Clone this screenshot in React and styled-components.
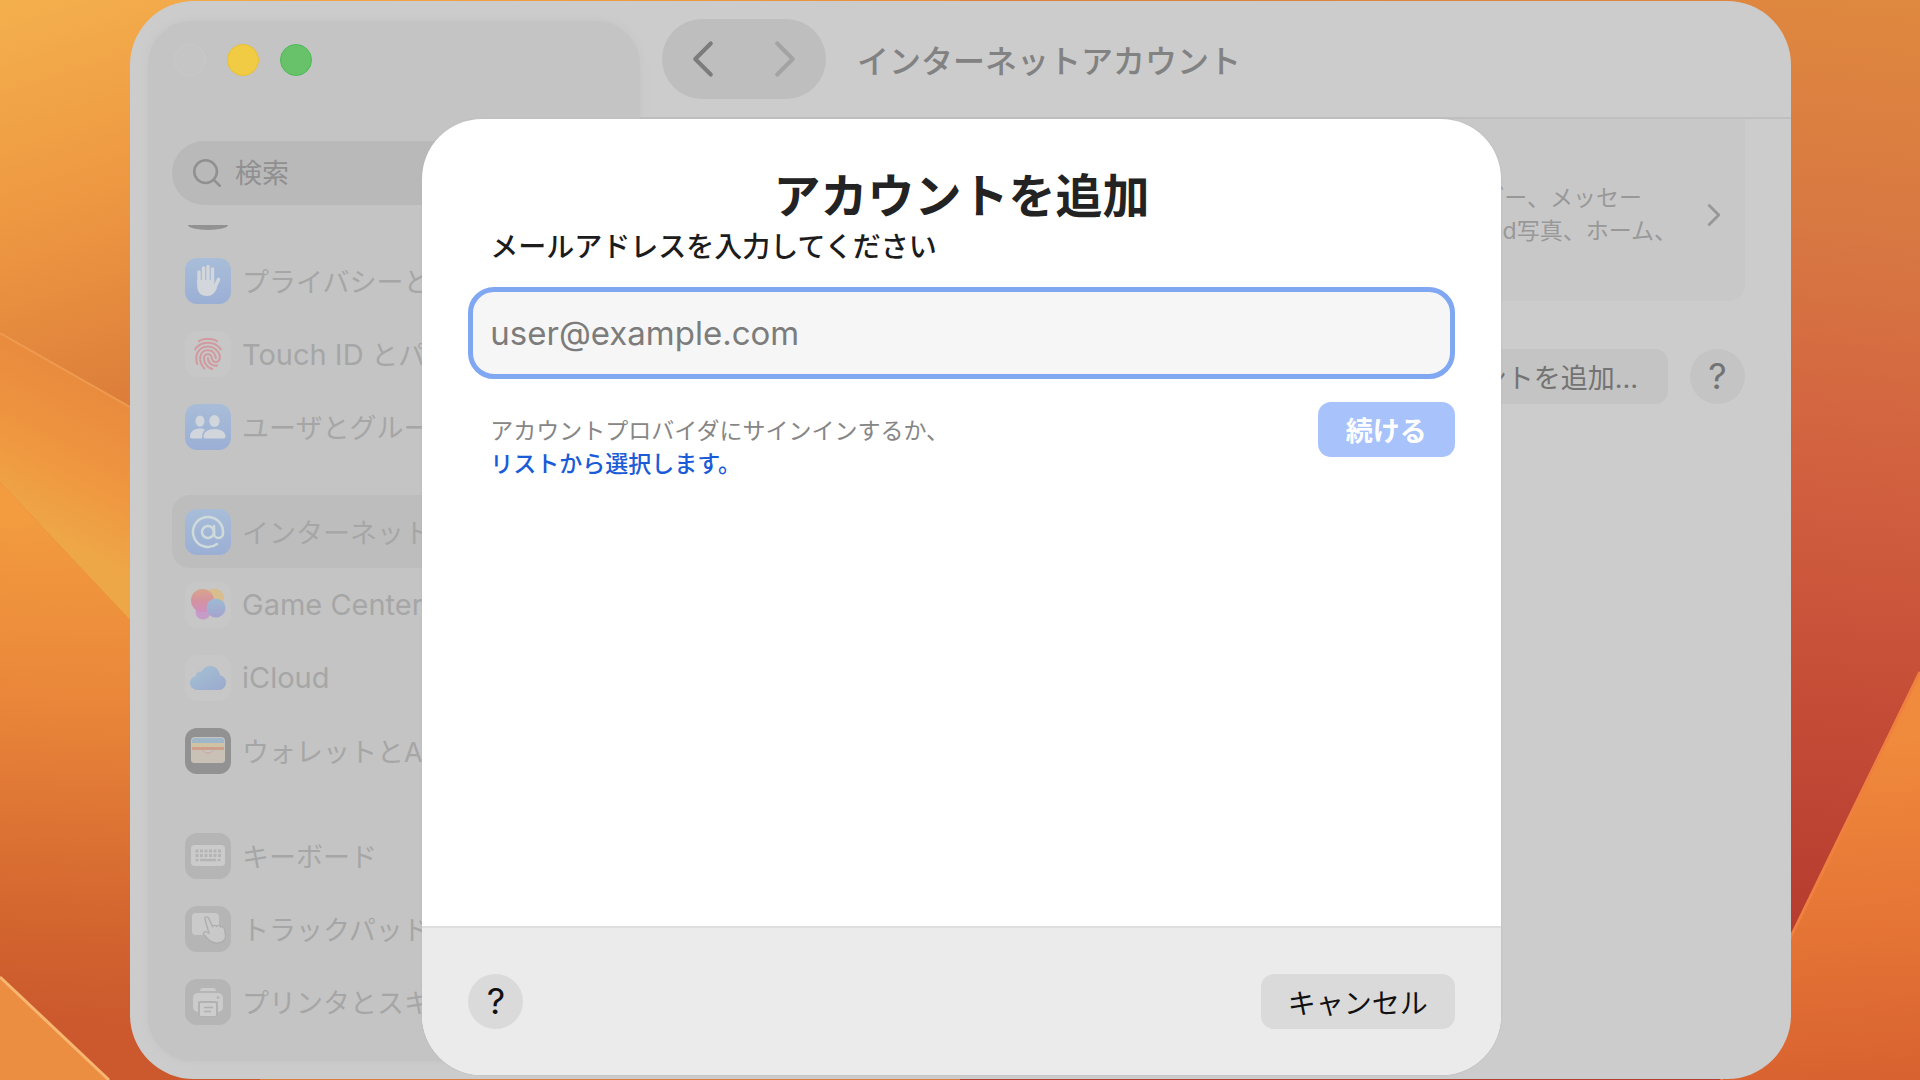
import React from "react";
import styled, { createGlobalStyle } from "styled-components";
import { AtSign, ChevronLeft, ChevronRight, Search } from "lucide-react";
import { IoFingerPrint } from "react-icons/io5";

const GlobalStyle = createGlobalStyle`
  * {
    box-sizing: border-box;
  }

  body {
    margin: 0;
    font-family: Inter, "Noto Sans CJK JP", sans-serif;
  }

  button,
  input {
    font-family: inherit;
  }
`;

const Desktop = styled.div`
  position: relative;
  min-height: 100vh;
  padding: 1px 129px 1px 130px;
  display: flex;
  overflow: hidden;
`;

const WallpaperSvg = styled.svg`
  position: absolute;
  inset: 0;
  width: 100%;
  height: 100%;
`;

const Window = styled.div`
  position: relative;
  flex: 1;
  display: flex;
  border-radius: 64px;
  background: #cccccc;
  overflow: hidden;
`;

const Sidebar = styled.aside`
  width: 492px;
  margin: 20px 0 18px 18px;
  padding: 23px 24px 20px;
  border-radius: 44px;
  background: #c4c4c4;
  box-shadow: 0 0 8px #c4c4c4;
`;

const Lights = styled.div`
  display: flex;
  gap: 21px;
  padding-left: 2px;
`;

const Light = styled.button`
  width: 32px;
  height: 32px;
  padding: 0;
  border: 1px solid ${(props) => props.$border};
  border-radius: 50%;
  background: ${(props) => props.$color};
`;

const SearchField = styled.label`
  display: flex;
  align-items: center;
  gap: 11px;
  height: 64px;
  margin-top: 65px;
  padding: 0 18px;
  border-radius: 32px;
  background: #b9b9b9;
  color: #909090;
`;

const SearchInput = styled.input`
  flex: 1;
  min-width: 0;
  padding: 0;
  border: none;
  outline: none;
  background: none;
  font-size: 27px;

  &::placeholder {
    color: #909090;
    opacity: 1;
  }
`;

const ClippedIcon = styled.div`
  width: 40px;
  height: 5px;
  margin: 20px 0 14px 16px;
  border-radius: 0 0 20px 20px / 0 0 5px 5px;
  background: #929292;
`;

const Group = styled.ul`
  margin: 0 0 32px;
  padding: 0;
  list-style: none;

  &:last-child {
    margin-bottom: 0;
  }
`;

const Item = styled.a`
  display: flex;
  align-items: center;
  gap: 11px;
  height: 73px;
  padding: 0 13px;
  border-radius: 18px;
  background: ${(props) => (props.$active ? "#bdbdbd" : "none")};
  color: #a6a6a6;
  font-size: 27px;
  text-decoration: none;
  white-space: nowrap;
`;

const Latin = styled.span`
  font-size: 29px;
`;

const Tile = styled.span`
  display: flex;
  align-items: center;
  justify-content: center;
  flex: none;
  width: 46px;
  height: 46px;
  border-radius: 12px;
  background: ${(props) => props.$background};
  color: ${(props) => props.$color};
`;

const Main = styled.main`
  flex: 1;
  min-width: 0;
  display: flex;
  flex-direction: column;
`;

const Toolbar = styled.header`
  display: flex;
  align-items: center;
  gap: 31px;
  height: 118px;
  padding: 0 22px;
  border-bottom: 2px solid #bfbfbf;
`;

const NavButtons = styled.div`
  display: flex;
  width: 164px;
  height: 80px;
  border-radius: 40px;
  background: #bebebe;
`;

const NavButton = styled.button`
  flex: 1;
  display: flex;
  align-items: center;
  justify-content: center;
  padding: 0;
  border: none;
  background: none;
  color: ${(props) => (props.disabled ? "#a3a3a3" : "#7c7c7c")};
`;

const WindowTitle = styled.h1`
  margin: 0;
  color: #828282;
  font-size: 32px;
  font-weight: 500;
`;

const Content = styled.div`
  display: flex;
  flex-direction: column;
  gap: 48px;
  padding: 0 46px 0 40px;
`;

const AccountCard = styled.a`
  display: flex;
  align-items: center;
  justify-content: flex-end;
  gap: 18px;
  height: 182px;
  padding: 10px 12px 0;
  border-radius: 0 0 16px 16px;
  background: #c8c8c8;
  color: #989898;
  font-size: 23px;
  line-height: 33px;
  text-decoration: none;
  white-space: nowrap;
`;

const Actions = styled.div`
  display: flex;
  justify-content: flex-end;
  gap: 22px;
`;

const AddButton = styled.button`
  height: 55px;
  padding: 0 30px;
  border: none;
  border-radius: 13px;
  background: #c4c4c4;
  color: #737373;
  font-size: 27px;
`;

const HelpButton = styled.button`
  width: 55px;
  height: 55px;
  padding: 0;
  border: none;
  border-radius: 50%;
  background: ${(props) => (props.$dimmed ? "#c4c4c4" : "#dadada")};
  color: ${(props) => (props.$dimmed ? "#737373" : "#111111")};
  font-size: 36px;
  font-weight: 400;
  line-height: 55px;
`;

const Overlay = styled.div`
  position: absolute;
  inset: 0;
  display: flex;
  justify-content: center;
  padding: 118px 0 4px 2px;
`;

const Dialog = styled.section`
  display: flex;
  flex-direction: column;
  width: 65%;
  border-radius: 60px;
  background: #ffffff;
  box-shadow: 0 0 2px #b5b5b5;
  overflow: hidden;
`;

const Form = styled.form`
  flex: 1;
  display: flex;
  flex-direction: column;
  padding: 50px 46px 0;
`;

const DialogTitle = styled.h2`
  margin: 0;
  color: #232323;
  font-size: 47px;
  font-weight: 700;
  line-height: 54px;
  text-align: center;
`;

const EmailLabel = styled.label`
  margin: 4px 0 20px;
  padding-left: 22px;
  color: #1c1c1c;
  font-size: 28px;
  font-weight: 500;
  line-height: 40px;
`;

const EmailInput = styled.input`
  height: 92px;
  padding: 0 17px;
  border: 5px solid #80a7f2;
  border-radius: 26px;
  outline: none;
  background: #f6f6f6;
  font-size: 33px;

  &::placeholder {
    color: #7c7c7c;
    opacity: 1;
  }
`;

const FormRow = styled.div`
  display: flex;
  align-items: flex-start;
  justify-content: space-between;
  margin-top: 23px;
`;

const Hint = styled.p`
  margin: 0;
  padding: 13px 0 0 22px;
  color: #868686;
  font-size: 23px;
  line-height: 33px;
`;

const HintLink = styled.a`
  display: block;
  color: #1a5bd7;
  font-weight: 500;
  text-decoration: none;
`;

const ContinueButton = styled.button`
  height: 55px;
  padding: 0 28px;
  border: none;
  border-radius: 13px;
  background: #a8c3fc;
  color: #ffffff;
  font-size: 27px;
  font-weight: 700;
`;

const Footer = styled.footer`
  display: flex;
  align-items: center;
  justify-content: space-between;
  height: 149px;
  padding: 0 46px;
  border-top: 2px solid #dedede;
  background: #ebebeb;
`;

const CancelButton = styled.button`
  height: 55px;
  padding: 0 27px;
  border: none;
  border-radius: 13px;
  background: #dadada;
  color: #111111;
  font-size: 28px;
`;

const Wallpaper = () => (
  <WallpaperSvg viewBox="0 0 1920 1080" preserveAspectRatio="none" aria-hidden="true">
    <defs>
      <linearGradient id="sky" x1="0" y1="0" x2="130" y2="400" gradientUnits="userSpaceOnUse">
        <stop offset="0" stopColor="#f4b04d" />
        <stop offset="0.5" stopColor="#ee9842" />
        <stop offset="1" stopColor="#dc7e3a" />
      </linearGradient>
      <linearGradient id="band" x1="90" y1="390" x2="20" y2="520" gradientUnits="userSpaceOnUse">
        <stop offset="0" stopColor="#e98c3e" />
        <stop offset="0.5" stopColor="#ef9640" />
        <stop offset="1" stopColor="#eea747" />
      </linearGradient>
      <linearGradient id="dune" x1="60" y1="520" x2="40" y2="1020" gradientUnits="userSpaceOnUse">
        <stop offset="0" stopColor="#f29b3f" />
        <stop offset="0.35" stopColor="#ea873a" />
        <stop offset="0.8" stopColor="#d3652f" />
        <stop offset="1" stopColor="#cb592d" />
      </linearGradient>
      <linearGradient id="dusk" x1="1900" y1="0" x2="1800" y2="930" gradientUnits="userSpaceOnUse">
        <stop offset="0" stopColor="#df883f" />
        <stop offset="0.25" stopColor="#d87842" />
        <stop offset="0.5" stopColor="#d26140" />
        <stop offset="0.75" stopColor="#c54d37" />
        <stop offset="1" stopColor="#b63c2f" />
      </linearGradient>
      <linearGradient id="ember" x1="1880" y1="740" x2="1900" y2="1080" gradientUnits="userSpaceOnUse">
        <stop offset="0" stopColor="#f08a3c" />
        <stop offset="0.5" stopColor="#e67636" />
        <stop offset="1" stopColor="#d86230" />
      </linearGradient>
    </defs>
    <rect width="960" height="1080" fill="url(#sky)" />
    <path d="M0 333L260 481V758L0 482Z" fill="url(#band)" />
    <path d="M0 333L260 481" stroke="#ee9a50" strokeWidth="2" />
    <path d="M0 482L260 758V1080H0Z" fill="url(#dune)" />
    <path d="M0 977L109 1080H0Z" fill="#ec8e41" />
    <path d="M0 977L109 1080" stroke="#f8b771" strokeWidth="3" />
    <rect x="960" width="960" height="1080" fill="url(#dusk)" />
    <path d="M1920 672L1721 1080H1920Z" fill="url(#ember)" />
    <path d="M1920 672L1721 1080" stroke="#f0803f" strokeWidth="3" />
  </WallpaperSvg>
);

const HandIcon = () => (
  <svg width="46" height="46" viewBox="0 0 46 46" fill="none" stroke="currentColor" strokeLinecap="round">
    <path d="M14 14V26M18.500 10V24M23 8.500V24M27.500 11V24" strokeWidth="3.400" />
    <path d="M33.500 21.500L29 31" strokeWidth="3.600" />
    <path d="M12.300 22H29.200V27L32 29.500C30 35 27.500 38 22 38C15.500 38 12.300 34 12.300 28Z" fill="currentColor" stroke="none" />
  </svg>
);

const PeopleIcon = () => (
  <svg width="46" height="46" viewBox="0 0 46 46" fill="currentColor">
    <ellipse cx="15" cy="17" rx="4.500" ry="5.500" />
    <ellipse cx="29.500" cy="17" rx="5.200" ry="6" />
    <path d="M5 32.500C5 28 9 24.500 15 24.500C17 24.500 18.800 25 20 25.800C18 27.500 17 30 17 34.500H7C5.600 34.500 5 33.800 5 32.500Z" />
    <path d="M18.500 32.500C18.500 28 23 25 29.500 25C36 25 40.500 28 40.500 32.500C40.500 33.800 39.700 34.500 38.500 34.500H20.500C19.200 34.500 18.500 33.800 18.500 32.500Z" />
  </svg>
);

const GameCenterIcon = () => (
  <svg width="46" height="46" viewBox="0 0 46 46">
    <defs>
      <linearGradient id="bubbleRed" x1="0" y1="0" x2="0" y2="1">
        <stop offset="0" stopColor="#d9a48c" />
        <stop offset="0.5" stopColor="#d4939f" />
        <stop offset="1" stopColor="#cf8fbd" />
      </linearGradient>
      <linearGradient id="bubbleBlue" x1="0" y1="0" x2="0" y2="1">
        <stop offset="0" stopColor="#9dbbd3" />
        <stop offset="1" stopColor="#a4a3cd" />
      </linearGradient>
    </defs>
    <ellipse cx="29" cy="15.500" rx="10" ry="9" fill="#d8bd8d" />
    <circle cx="18" cy="30" r="7.500" fill="#c59bc8" />
    <circle cx="17.500" cy="18.500" r="11.500" fill="url(#bubbleRed)" />
    <circle cx="31" cy="26" r="9.500" fill="url(#bubbleBlue)" />
  </svg>
);

const CloudIcon = () => (
  <svg width="46" height="46" viewBox="0 0 46 46">
    <defs>
      <linearGradient id="cloudFill" x1="0" y1="0" x2="1" y2="1">
        <stop offset="0" stopColor="#a4c2d3" />
        <stop offset="1" stopColor="#9ba9ce" />
      </linearGradient>
    </defs>
    <path d="M13 35C8.500 35 5 32 5 28C5 24.500 7.500 22 10.500 21.300C10.800 18 13.500 16 16.500 16.600C18.200 13 21.500 11 25 11C30.500 11 34.500 15 35 20.500C38.800 21 41 24 41 27.500C41 32 37.800 35 33.500 35Z" fill="url(#cloudFill)" />
  </svg>
);

const WalletIcon = () => (
  <svg width="46" height="46" viewBox="0 0 46 46">
    <rect x="6" y="9" width="34" height="26" rx="4" fill="#c6c5c2" />
    <path d="M7 13C7 11 8.500 10 10 10H36C37.500 10 39 11 39 13V15H7Z" fill="#9fb7c9" />
    <rect x="7" y="15" width="32" height="4" fill="#cfc3a4" />
    <rect x="7" y="19" width="32" height="3" fill="#cf9f8e" />
    <path d="M6 22H17C19 22 19 25 23 25C27 25 27 22 29 22H40V31C40 33.500 38.500 35 36 35H10C7.500 35 6 33.500 6 31Z" fill="#c9c0b6" />
    <path d="M17 22C19 22 19 25 23 25C27 25 27 22 29 22" fill="none" stroke="#cba598" strokeWidth="1" />
  </svg>
);

const KeyboardIcon = () => (
  <svg width="46" height="46" viewBox="0 0 46 46">
    <rect x="6" y="12" width="34" height="21" rx="4" fill="#cbcbcb" />
    <path d="M10.500 18H36M10.500 22.500H36" stroke="#b4b4b4" strokeWidth="3" strokeDasharray="3 1.500" />
    <path d="M10.500 27H13.500M15 27H31M32.500 27H35.500" stroke="#b4b4b4" strokeWidth="2.500" />
  </svg>
);

const TrackpadIcon = () => (
  <svg width="46" height="46" viewBox="0 0 46 46">
    <rect x="7" y="7" width="27" height="22" rx="4" fill="#cacaca" />
    <path
      d="M20 13.500C19 10.800 22.500 9.800 23.700 12.300L27.500 20.500C28.500 18.800 30.800 19 31.500 20.500C33 18.800 35 19.300 35.500 21C37.500 20 39 21.300 39.500 23.500L40.500 29C41 33.500 38 36.500 33.500 37C28 37.500 24.500 35 22 32L18.800 28.500C17.500 26.500 19.500 25 21.500 26L24 27.300Z"
      fill="#c9c9c9"
      stroke="#adadad"
      strokeWidth="1.300"
    />
  </svg>
);

const PrinterIcon = () => (
  <svg width="46" height="46" viewBox="0 0 46 46">
    <path d="M15 12C15 10 16 9 18 9H28C30 9 31 10 31 12Z" fill="#cbcbcb" />
    <rect x="8" y="14" width="30" height="19" rx="5" fill="#cbcbcb" />
    <rect x="13" y="22" width="20" height="16" rx="2" fill="#b2b2b2" />
    <rect x="15" y="24" width="16" height="13" rx="1" fill="#cdcdcd" />
    <path d="M19 28.500H28M19 32.500H26" stroke="#b0b0b0" strokeWidth="1.600" />
    <circle cx="33" cy="18.500" r="1.300" fill="#b2b2b2" />
  </svg>
);

const blue = "linear-gradient(#a8bdd8, #9bafd5)";
const gray = "#b5b5b5";
const light = "#c7c7c7";

const groups = [
  [
    { name: "プライバシーとセキュリティ", background: blue, color: "#d3d6da", icon: <HandIcon /> },
    {
      latin: "Touch ID",
      name: "とパスワード",
      background: light,
      color: "#d09a9f",
      icon: <IoFingerPrint size={34} />,
    },
    { name: "ユーザとグループ", background: blue, color: "#d0d6db", icon: <PeopleIcon /> },
  ],
  [
    {
      name: "インターネットアカウント",
      background: blue,
      color: "#cfdada",
      icon: <AtSign size={36} strokeWidth={1.7} />,
      active: true,
    },
    { latin: "Game Center", background: light, icon: <GameCenterIcon /> },
    { latin: "iCloud", background: light, icon: <CloudIcon /> },
    { name: "ウォレットとApple Pay", background: "#929292", icon: <WalletIcon /> },
  ],
  [
    { name: "キーボード", background: gray, icon: <KeyboardIcon /> },
    { name: "トラックパッド", background: gray, icon: <TrackpadIcon /> },
    { name: "プリンタとスキャナ", background: gray, icon: <PrinterIcon /> },
  ],
];

export default function App() {
  return (
    <Desktop>
      <GlobalStyle />
      <Wallpaper />
      <Window>
        <Sidebar>
          <Lights>
            <Light aria-label="閉じる" $color="#c5c5c5" $border="#c9c9c9" />
            <Light aria-label="しまう" $color="#f1cb43" $border="#eac030" />
            <Light aria-label="拡大" $color="#67c269" $border="#4eb955" />
          </Lights>
          <SearchField>
            <Search size={34} strokeWidth={1.8} />
            <SearchInput type="search" placeholder="検索" aria-label="検索" />
          </SearchField>
          <ClippedIcon />
          <nav>
            {groups.map((items, index) => (
              <Group key={index}>
                {items.map((item) => (
                  <li key={item.name || item.latin}>
                    <Item href="#" $active={item.active}>
                      <Tile $background={item.background} $color={item.color}>
                        {item.icon}
                      </Tile>
                      <span>
                        {item.latin && <Latin>{item.latin}</Latin>} {item.name}
                      </span>
                    </Item>
                  </li>
                ))}
              </Group>
            ))}
          </nav>
        </Sidebar>

        <Main>
          <Toolbar>
            <NavButtons>
              <NavButton aria-label="戻る">
                <ChevronLeft size={62} strokeWidth={1.6} />
              </NavButton>
              <NavButton aria-label="進む" disabled>
                <ChevronRight size={62} strokeWidth={1.6} />
              </NavButton>
            </NavButtons>
            <WindowTitle>インターネットアカウント</WindowTitle>
          </Toolbar>
          <Content>
            <AccountCard href="#">
              <span>
                連絡先、カレンダー、メッセー
                <br />
                Siri、メモ、iCloud写真、ホーム、
              </span>
              <ChevronRight size={38} strokeWidth={1.8} />
            </AccountCard>
            <Actions>
              <AddButton>アカウントを追加…</AddButton>
              <HelpButton $dimmed aria-label="ヘルプ">?</HelpButton>
            </Actions>
          </Content>
        </Main>

        <Overlay>
          <Dialog role="dialog" aria-labelledby="dialog-title">
            <Form>
              <DialogTitle id="dialog-title">アカウントを追加</DialogTitle>
              <EmailLabel htmlFor="email">メールアドレスを入力してください</EmailLabel>
              <EmailInput id="email" type="email" placeholder="user@example.com" />
              <FormRow>
                <Hint>
                  アカウントプロバイダにサインインするか、
                  <HintLink href="#">リストから選択します。</HintLink>
                </Hint>
                <ContinueButton type="button">続ける</ContinueButton>
              </FormRow>
            </Form>
            <Footer>
              <HelpButton aria-label="ヘルプ">?</HelpButton>
              <CancelButton>キャンセル</CancelButton>
            </Footer>
          </Dialog>
        </Overlay>
      </Window>
    </Desktop>
  );
}
